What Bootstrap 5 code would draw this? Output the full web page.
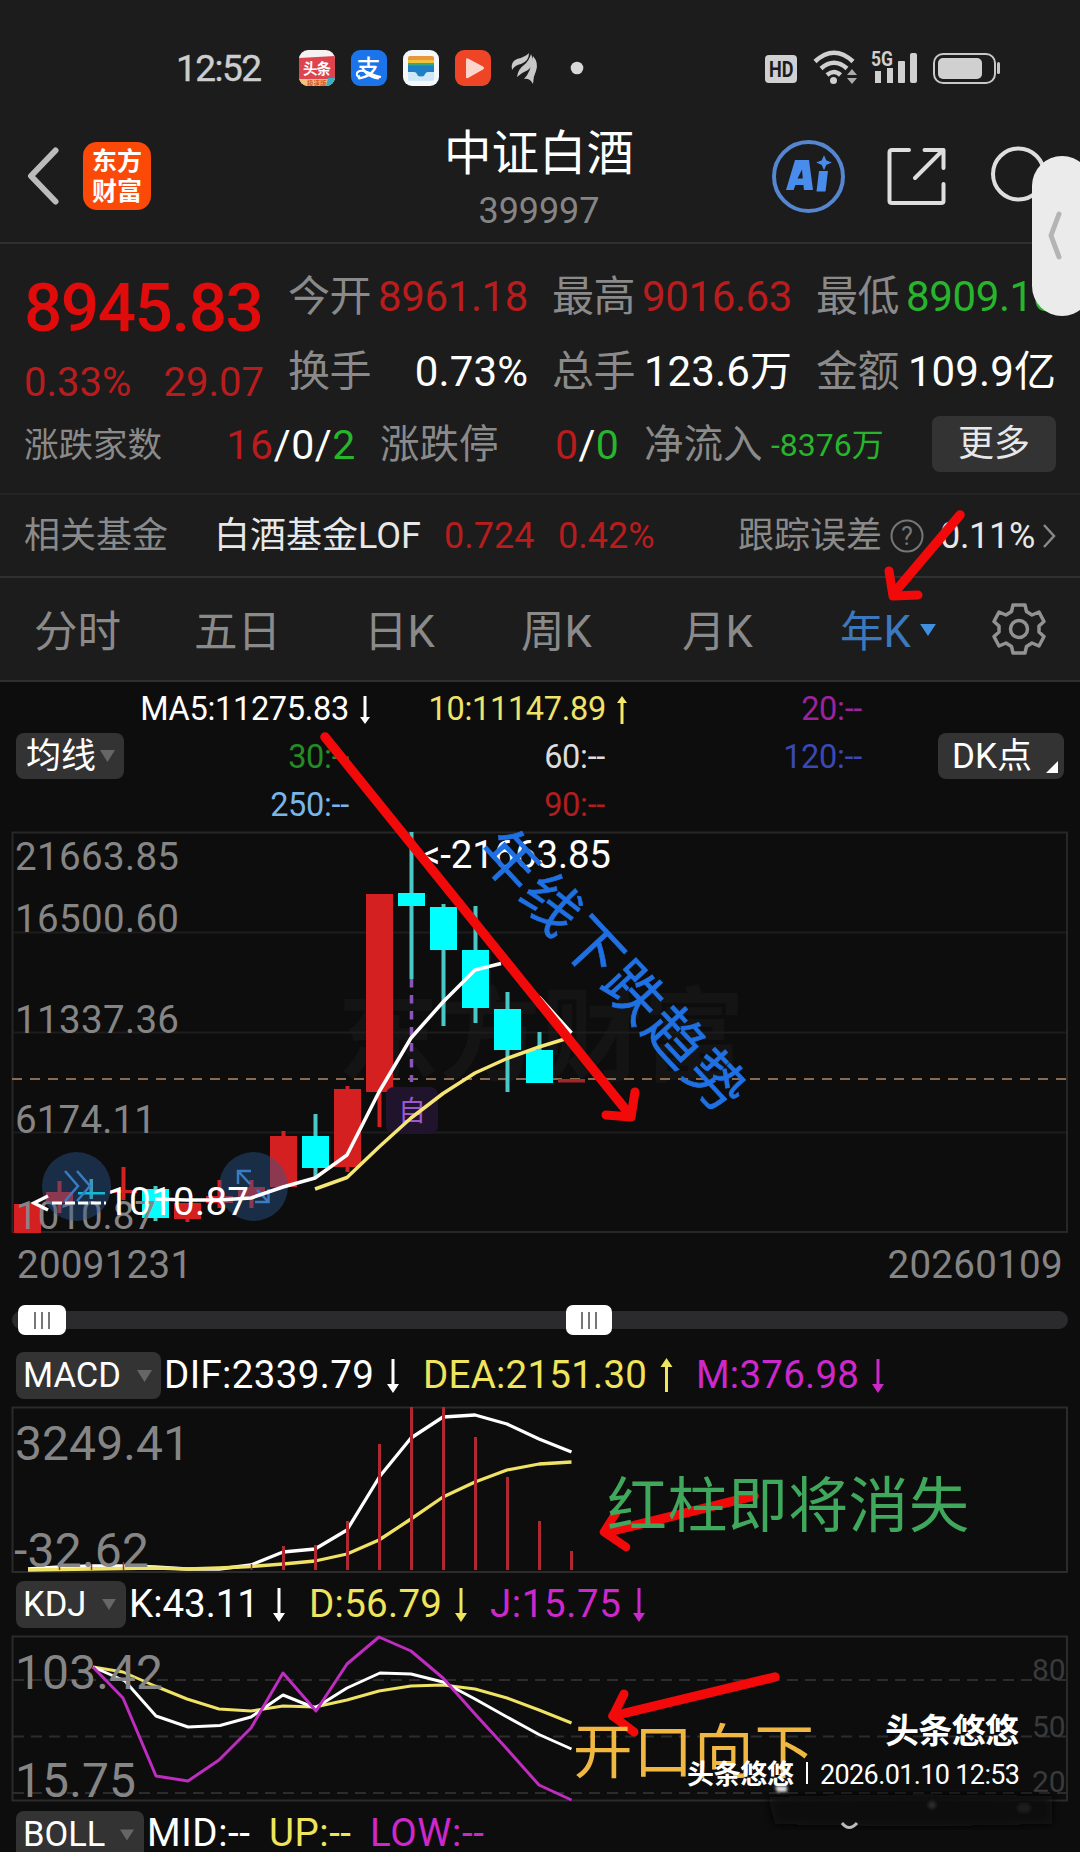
<!DOCTYPE html>
<html lang="zh-CN">
<head>
<meta charset="utf-8">
<meta name="viewport" content="width=device-width, initial-scale=1">
<title>中证白酒 399997</title>
<link rel="stylesheet" href="https://cdn.jsdelivr.net/npm/bootstrap@5.3.0/dist/css/bootstrap.min.css">
<style>
  body { width:1080px; height:1852px; overflow:hidden; background:#0d0d0d; color:#fff; line-height:1;
    font-family:Roboto,"Noto Sans CJK SC",sans-serif; }
  svg { display:block; flex:none; overflow:visible; }
  svg text { font-family:Roboto,"Noto Sans CJK SC",sans-serif; }
  .screen { position:relative; width:1080px; height:1852px; overflow:hidden; }
  .screen > * { flex-shrink:0; }
  .panel-top { background:#1c1c1c; }
  .t-red { color:#b81c1c; } .t-green { color:#27b52c; } .t-gray { color:#8a8a8a; }
  .statusbar { height:104px; padding:32px 80px 0 176px; }
  .clock { font-size:37px; letter-spacing:-1.5px; color:#cdcdcd; width:123px; -webkit-text-stroke:.4px #cdcdcd; }
  .app-ico { margin-right:16px; }
  .titlebar { height:140px; border-bottom:2px solid #303030; padding:6px 0 0 27px; }
  .t-name { font-size:47.5px; } .t-code { font-size:36px; letter-spacing:-.1px; color:#858585; }
  .quote { height:251px; border-bottom:2px solid #242424; padding-left:24px; }
  .q-line { height:75px; }
  .q-main { width:264px; }
  .q-price { font-size:67.5px; font-weight:500; color:#e00b0b; letter-spacing:-1.5px; height:115px; padding-top:30px; }
  .q-chg { font-size:40px; width:240px; height:50px; padding-top:4px; }
  .q-cell { width:240px; margin-right:24px; font-size:42px; letter-spacing:-.4px; }
  .q-line.second .q-cell { letter-spacing:.1px; }
  .q-cell .t-gray { letter-spacing:-.6px; font-size:42px; }
  .q-foot { font-size:41px; height:72px; white-space:nowrap; }
  .btn-more { width:124px; height:56px; background:#333; color:#e8e8e8; font-size:36px; border-radius:8px; line-height:1; margin-top:-2px; }
  .funds { height:83px; border-bottom:2px solid #303030; font-size:36px; padding-left:24px; }
  .tabs-k { height:104px; border-bottom:2px solid #303030; font-size:43.5px; color:#8a8a8a; padding:8px 0 0 34px; }
  .chip { background:#333; border-radius:8px; color:#fff; height:46px; font-size:35px; }
  .ma-zone { height:148px; padding:0 16px; }
  .ma-grid { width:772px; font-size:32.5px; }
  .ma-row { height:48px; }
  .ma-row > span { text-align:right; letter-spacing:-.3px; }
  .dates { height:58px; padding:4px 17px 0; font-size:38.5px; letter-spacing:.3px; color:#858585; }
  .ind-row { height:53px; padding-left:16px; }
  .ind-row .chip { font-size:34.5px; height:47px; padding-left:7px; }
  .slider { height:63px; padding:19px 12px 0; }
  .s-track { height:18px; background:#2b2b2d; border-radius:9px; width:1056px; }
  .s-thumb { position:absolute; top:-6px; height:30px; background:#fff; border-radius:7px; gap:5px; }
  .s-thumb i { width:2px; height:17px; background:#777; }
  .side-tab { position:absolute; left:1032px; top:156px; width:60px; height:160px; border-radius:34px; background:#ebebeb; z-index:3; }
  .overlay { position:absolute; left:0; top:0; z-index:2; pointer-events:none; }
</style>
</head>
<body>
<div class="screen d-flex flex-column">

  <div class="panel-top">
    <!-- status bar -->
    <div class="statusbar d-flex align-items-start">
      <div class="d-flex align-items-center" style="height:72px">
        <span class="clock">12:52</span>
        <svg class="app-ico" width="36" height="36" viewBox="0 0 36 36"><defs><clipPath id="c1"><rect width="36" height="36" rx="9"/></clipPath></defs><g clip-path="url(#c1)"><rect width="36" height="36" fill="#f6f2f2"/><path d="M0 8L36 6V30H0z" fill="#dc4450"/><rect y="29" width="36" height="7" fill="#f3c27c"/><path d="M29 28h7v8h-9z" fill="#35b3c4"/><text x="4" y="24" font-size="14.500" font-weight="700" fill="#fff" textLength="28">头条</text><text x="8" y="35.500" font-size="6.500" font-weight="700" fill="#d8572c">极速版</text></g></svg>
        <svg class="app-ico" width="36" height="36" viewBox="0 0 36 36"><rect width="36" height="36" rx="9" fill="#1c74ea"/><text x="5.500" y="26.500" font-size="24" font-weight="500" fill="#fff">支</text><path d="M9 26Q5 27 6 23Q8 19 16 22Q24 26 30 27" fill="none" stroke="#fff" stroke-width="2"/></svg>
        <svg class="app-ico" width="36" height="36" viewBox="0 0 36 36"><rect width="36" height="36" rx="9" fill="#f4f8fb"/><path d="M5 8q0-2 2-2h22q2 0 2 2v5H5z" fill="#e8963a"/><path d="M5 10h26v4H5z" fill="#f1c23c"/><path d="M5 13h26v3H5z" fill="#37a77e"/><path d="M5 15.500h26v11H5z" fill="#1e7fc4"/><path d="M5 22h6q2 0 3 2 1 3 4 3t4-3q1-2 3-2h6v7q0 2-2 2H7q-2 0-2-2z" fill="#cfe8f8"/></svg>
        <svg class="app-ico" width="36" height="36" viewBox="0 0 36 36"><rect width="36" height="36" rx="9" fill="#ee4527"/><path d="M11 9.500q0-2 2-1l15 8q2 1.500 0 3l-15 8.500q-2 1-2-1z" fill="#fbd5cb"/></svg>
        <svg width="30" height="36" viewBox="0 0 30 36" style="margin-left:3px;margin-right:30px"><g fill="#c8c8c8"><path d="M2 20Q0 12 7 9Q15 7 19 3Q19 11 11 14Q5 15 2 20z"/><path d="M7 27Q8 19 14 15Q19 11 21 4Q26 14 18 20Q11 23 7 27z"/><path d="M14 29Q21 22 23 6Q29 13 26 21Q23 27 23 34Q20 28 14 29z"/></g></svg>
        <svg width="14" height="14" viewBox="0 0 14 14"><circle cx="7" cy="7" r="6.300" fill="#d8d8d8"/></svg>
      </div>
      <div class="ms-auto" style="padding-top:18px">
        <svg width="236" height="36" viewBox="764 50 236 36"><rect x="765" y="55" width="32" height="28" rx="4" fill="#d0d0d0"/><text x="769" y="77" font-size="22" font-weight="700" fill="#1c1c1c" textLength="24.500" lengthAdjust="spacingAndGlyphs">HD</text>
          <g fill="none" stroke="#d0d0d0" stroke-width="4.500"><path d="M815 61.500Q834 44 853 61.500"/><path d="M821 68.500Q834 57 847 68.500"/><path d="M827 75Q834 69 840.500 75"/></g><circle cx="833.500" cy="80.500" r="3.500" fill="#d0d0d0"/><path d="M847 75l5-6 5 6zM847 78l5 6 5-6z" fill="#aaa"/>
          <text x="871" y="66" font-size="20" font-weight="700" fill="#d0d0d0" textLength="22" lengthAdjust="spacingAndGlyphs">5G</text>
          <g fill="#d0d0d0"><rect x="875" y="71" width="6" height="12"/><rect x="887" y="68" width="6" height="15"/><rect x="898" y="61" width="7" height="22" rx="1"/><rect x="910" y="53" width="7" height="30" rx="2"/></g>
          <rect x="934" y="54" width="61" height="29" rx="9" fill="none" stroke="#c8c8c8" stroke-width="2"/><rect x="938" y="58" width="44" height="21" rx="5" fill="#d0d0d0"/><rect x="997" y="62" width="3" height="12" rx="1.500" fill="#c8c8c8"/></svg>
      </div>
    </div>

    <!-- title bar -->
    <div class="titlebar d-flex align-items-center">
      <svg width="32" height="58" viewBox="0 0 32 58"><path d="M28.500 3.500L4 29L28.500 54.500" fill="none" stroke="#bcbcbc" stroke-width="6" stroke-linecap="round" stroke-linejoin="round"/></svg>
      <svg width="68" height="68" viewBox="0 0 68 68" style="margin-left:24px"><rect width="68" height="68" rx="14" fill="#fb4a08"/><g font-size="25" font-weight="700" fill="#fff"><text x="9" y="28" textLength="50">东方</text><text x="9" y="58" textLength="50">财富</text></g></svg>
      <div class="text-center" style="width:376px;margin-left:200px;padding-top:8px">
        <div class="t-name">中证白酒</div>
        <div class="t-code" style="margin-top:15px">399997</div>
      </div>
      <svg width="250" height="76" viewBox="768 138 250 76" style="margin-left:41px"><circle cx="808.500" cy="176.500" r="34.500" fill="none" stroke="#5586cf" stroke-width="4"/>
        <path d="M786 190l9-30h14l4 30h-9l-.6-5h-8l-1.800 5zM797.500 178.500h5.300l-.8-9z" fill="#4a8cec" fill-rule="evenodd"/><path d="M819 171h9l-2.500 20.500h-9z" fill="#4a8cec"/><path d="M824 157l1.800 4 4 1.500-4 1.800-1.800 4-1.800-4-4-1.800 4-1.500z" fill="#4a8cec" stroke="#4a8cec" stroke-width="1.500"/>
        <g fill="none" stroke="#dedede" stroke-width="4" stroke-linecap="round" stroke-linejoin="round"><path d="M909 150H892Q889.500 150 889.500 152.500V201Q889.500 203 892 203H941Q943.500 203 943.500 201V184M924.500 150H943.500V168M941 152L915 178"/><circle cx="1018.500" cy="174" r="25.500"/></g></svg>
    </div>

    <!-- quote -->
    <div class="quote">
      <div class="d-flex">
        <div class="q-main">
          <div class="q-price">8945.83</div>
          <div class="q-chg t-red d-flex justify-content-between align-items-start"><span>0.33%</span><span>29.07</span></div>
        </div>
        <div>
          <div class="d-flex q-line" style="height:105px">
            <div class="q-cell d-flex justify-content-between align-items-center"><span class="t-gray">今开</span><span class="t-red">8961.18</span></div>
            <div class="q-cell d-flex justify-content-between align-items-center"><span class="t-gray">最高</span><span class="t-red">9016.63</span></div>
            <div class="q-cell d-flex justify-content-between align-items-center"><span class="t-gray">最低</span><span class="t-green">8909.16</span></div>
          </div>
          <div class="d-flex q-line second" style="margin-top:-15px">
            <div class="q-cell d-flex justify-content-between align-items-center"><span class="t-gray">换手</span><span>0.73%</span></div>
            <div class="q-cell d-flex justify-content-between align-items-center"><span class="t-gray">总手</span><span>123.6万</span></div>
            <div class="q-cell d-flex justify-content-between align-items-center"><span class="t-gray">金额</span><span>109.9亿</span></div>
          </div>
        </div>
      </div>
      <div class="q-foot d-flex align-items-center">
        <span class="t-gray" style="font-size:34.500px;width:139px">涨跌家数</span>
        <span class="text-end" style="width:193px;letter-spacing:.6px"><span class="t-red">16</span>/0/<span class="t-green">2</span></span>
        <span class="t-gray" style="font-size:39.500px;margin-left:24px;width:118px">涨跌停</span>
        <span class="text-end" style="width:121px;letter-spacing:.3px"><span class="t-red">0</span>/<span class="t-green">0</span></span>
        <span class="t-gray" style="font-size:39.500px;margin-left:25px;width:119px">净流入</span>
        <span class="t-green" style="font-size:32px;margin-left:8px;width:161px">-8376万</span>
        <button class="btn btn-more p-0 border-0">更多</button>
      </div>
    </div>

    <!-- related fund -->
    <div class="funds d-flex align-items-center">
      <span class="t-gray" style="width:190px">相关基金</span>
      <span style="width:230px;color:#e8e8e8">白酒基金LOF</span>
      <span class="t-red" style="width:114px">0.724</span>
      <span class="t-red" style="width:180px">0.42%</span>
      <span class="t-gray" style="width:152px">跟踪误差</span>
      <svg width="34" height="34" viewBox="0 0 34 34"><circle cx="17" cy="17" r="15.500" fill="none" stroke="#777" stroke-width="2"/><text x="17" y="26" text-anchor="middle" font-size="25" fill="#777">?</text></svg>
      <span style="margin-left:16px;width:102px;letter-spacing:-.3px;color:#e8e8e8">0.11%</span>
      <svg width="14" height="26" viewBox="0 0 14 26"><path d="M2 2L12 13L2 24" fill="none" stroke="#888" stroke-width="2.500"/></svg>
    </div>

    <!-- period tabs -->
    <div class="tabs-k d-flex align-items-center">
      <span style="width:160px">分时</span>
      <span style="width:170px">五日</span>
      <span style="width:157px">日K</span>
      <span style="width:161px">周K</span>
      <span style="width:158px">月K</span>
      <span style="width:80px;color:#3c78bd">年K</span>
      <svg width="16" height="13" viewBox="0 0 17 14" style="margin-top:-6px"><path d="M0 0H17L8.500 13z" fill="#4090e0"/></svg>
      <svg width="52" height="52" viewBox="-26 -26 52 52" style="margin-left:57px;margin-top:-8px"><path d="M-6-24H6L7.500-17.500L13-14L20-17L25-7.500L20-3V3L25 7.500L20 17L13 14L7.500 17.500L6 24H-6L-7.500 17.500L-13 14L-20 17L-25 7.500L-20 3V-3L-25-7.500L-20-17L-13-14L-7.500-17.500z" fill="none" stroke="#929292" stroke-width="3.500" stroke-linejoin="round"/><circle r="8.500" fill="none" stroke="#929292" stroke-width="3.500"/></svg>
    </div>
  </div>

  <!-- moving averages -->
  <div class="ma-zone d-flex align-items-center">
    <div class="chip d-flex align-items-center" style="width:108px;padding-left:10px">均线<svg class="ms-1" width="15" height="12" viewBox="0 0 15 12"><path d="M0 0H15L7.500 12z" fill="#666"/></svg></div>
    <div class="ma-grid" style="margin-top:3px">
      <div class="ma-row d-flex align-items-center"><span style="width:225px">MA5:11275.83</span>
        <svg width="10" height="28" viewBox="0 0 10 28" style="margin-left:11px"><path d="M3.500 0h3v21h3.500L5 28L0 21h3.500z" fill="#fff"/></svg>
        <span style="width:236px;color:#efe36a">10:11147.89</span>
        <svg width="10" height="28" viewBox="0 0 10 28" style="margin-left:11px"><path d="M3.500 28h3V7H10L5 0L0 7h3.500z" fill="#f5e96a"/></svg>
        <span style="width:235px;color:#9b239b">20:--</span></div>
      <div class="ma-row d-flex align-items-center"><span style="width:225px;color:#248c24">30:--</span><span style="width:256px;color:#ddd">60:--</span><span style="width:257px;color:#3b48b4">120:--</span></div>
      <div class="ma-row d-flex align-items-center"><span style="width:225px;color:#78b6e8">250:--</span><span style="width:256px;color:#b01e1e">90:--</span></div>
    </div>
    <div class="chip d-flex align-items-center ms-auto" style="width:126px;padding-left:14px">DK点<svg width="12" height="12" viewBox="0 0 12 12" style="margin-left:14px;margin-top:22px"><path d="M12 0V12H0z" fill="#fff"/></svg></div>
  </div>

  <!-- yearly candles -->
  <svg width="1080" height="404" viewBox="0 830 1080 404">
    <text x="337" y="1073" font-size="102" font-weight="700" fill="#141414">东方财富</text>
    <g fill="none" stroke="#272727" stroke-width="2"><path d="M12.500 832.500H1067V1232H12.500z"/></g>
    <g stroke="#1d1d1d" stroke-width="2"><path d="M13 932.500H1066M13 1032.500H1066M13 1132.500H1066"/></g>
    <path d="M12 1079H1066" stroke="#8a6a50" stroke-width="1.800" stroke-dasharray="10 8"/>
    <g fill="#d42020">
      <path d="M14 1204h27v29h-27zM46 1192h27v11h-27zM57.500 1181h4v32h-4zM110 1190h27v3h-27zM121.500 1167h4v33h-4zM174 1203h27v16h-27zM185.500 1203h4v19h-4zM206 1196h27v7h-27zM217.500 1180h4v28h-4zM238 1187h27v10h-27zM249.500 1180h4v28h-4zM270 1136h27v51h-27zM281.500 1131h4v10h-4zM334 1089h27v78h-27zM345.500 1086h4v86h-4zM366 894h27v198h-27zM377.500 1090h4v37h-4z"/><path d="M558 1079h27v3.500h-27z" fill="#a02828"/>
    </g>
    <g fill="#4ac8c8"><path d="M89.500 1179h3.500v20h-3.500zM153.500 1186h4v35h-4zM313.500 1114h4v64h-4zM409.500 832h4v147h-4zM441.500 904h4v122h-4zM473.500 906h4v117h-4zM505.500 992h4v100h-4zM537.500 1032h4v51h-4z"/></g>
    <g fill="#00ffff"><path d="M78 1192h27v2.500h-27zM142 1189h27v29h-27zM302 1136h27v32h-27zM398 893h27v13h-27zM430 907h27v43h-27zM462 950h27v58h-27zM494 1009h27v41h-27zM526 1050h27v33h-27z"/></g>
    <g fill="#858585" font-size="38.500">
      <text x="15" y="870" textLength="164">21663.85</text><text x="15" y="932" textLength="164">16500.60</text><text x="15" y="1033" textLength="164">11337.36</text><text x="15" y="1133" textLength="141">6174.11</text><text x="16" y="1229" textLength="140">1010.87</text></g>
    <path d="M411.500 979V1082" stroke="#8b55b8" stroke-width="3.500" stroke-dasharray="8.500 7.500"/>
    <rect x="386" y="1087" width="52" height="47" rx="8" fill="#20132c"/>
    <text x="412" y="1121" font-size="28" fill="#9b58d0" text-anchor="middle">自</text>
    <circle cx="76.500" cy="1186.500" r="34.500" fill="#2a5a96" fill-opacity=".42"/><circle cx="253.500" cy="1186.500" r="34.500" fill="#2a5a96" fill-opacity=".42"/>
    <path d="M65 1171L78 1186L65 1201M77 1171L90 1186L77 1201" fill="none" stroke="#3a7cc4" stroke-width="2.500"/>
    <path d="M251 1171H238V1184M238 1171L250 1184M255 1202H268.500V1189M268.500 1202L257 1190" fill="none" stroke="#3a7cc4" stroke-width="2.500"/>
    <g fill="none" stroke-width="3.500" stroke-linejoin="round">
      <path stroke="#fff" d="M155 1199L187 1200L219 1200L251 1198L283 1187L315 1178L347 1155L379 1092L411 1038L443 1002L475 970L501 963.500M539 997L571.500 1033"/>
      <path stroke="#f5e676" d="M315 1189L347 1177.500L379 1147L411 1118L443 1093.500L475 1073L507 1058.500L539 1047L571.500 1037"/></g>
    <g fill="#fff" font-size="38.500"><text x="421" y="868" textLength="190">&lt;-21663.85</text><text x="107" y="1215" textLength="142">1010.87</text></g>
    <path d="M48 1196L34 1203L48 1210" fill="none" stroke="#fff" stroke-width="3.500"/><path d="M52 1203H106" stroke="#fff" stroke-width="3" stroke-dasharray="10 3"/>
  </svg>

  <div class="dates d-flex justify-content-between align-items-center"><span>20091231</span><span>20260109</span></div>

  <!-- range slider -->
  <div class="slider d-flex align-items-start">
    <div class="s-track position-relative">
      <div class="s-thumb d-flex align-items-center justify-content-center" style="left:6px;width:48px"><i></i><i></i><i></i></div>
      <div class="s-thumb d-flex align-items-center justify-content-center" style="left:554px;width:46px"><i></i><i></i><i></i></div>
    </div>
  </div>

  <!-- MACD -->
  <div class="ind-row d-flex align-items-start" style="margin-top:-3px">
    <div class="chip d-flex align-items-center" style="width:145px">MACD<svg width="15" height="12" viewBox="0 0 15 12" style="margin-left:16px"><path d="M0 0H15L7.500 12z" fill="#666"/></svg></div>
    <svg width="730" height="47" viewBox="161 1352 730 47" font-size="38.500">
      <text x="164" y="1388" fill="#fff" textLength="210">DIF:2339.79</text><text x="423" y="1388" fill="#f0e45c" textLength="224">DEA:2151.30</text><text x="696" y="1388" fill="#cc28cc" textLength="163">M:376.98</text>
      <path d="M391.500 1359h3v25h4.500L393 1393l-6-9h4.500z" fill="#fff"/><path d="M665 1392h3v-25h4.500L666.500 1358l-6 9h4.500z" fill="#f0e45c"/><path d="M876.500 1359h3v25h4.500L878 1393l-6-9h4.500z" fill="#cc28cc"/></svg>
  </div>
  <svg width="1080" height="168" viewBox="0 1405 1080 168">
    <path d="M12.500 1407.500H1067V1572H12.500z" fill="none" stroke="#2b2b2b" stroke-width="2"/>
    <g fill="none" stroke-width="3.300" stroke-linejoin="round"><path stroke="#fff" d="M28 1569L60 1567L91 1566L123 1566L155 1567L187 1569L219 1569L251 1565L283 1552L315 1549L347 1530L380 1476L411 1438L443 1417L475 1415L507 1424L539 1439L571.500 1452"/>
    <path stroke="#efe264" d="M28 1570L155 1568L187 1569L219 1568L251 1566.500L283 1564L315 1561L347 1554L379 1540L411 1519L443 1497L475 1482L507 1470L539 1464L571.500 1462"/></g>
    <path stroke="#b0282f" stroke-width="3" d="M283.500 1546V1570M315.500 1545V1570M347.500 1521V1570M379.500 1444V1570M411.500 1407V1570M443.500 1407V1570M475.500 1437V1570M507.500 1477V1570M539.500 1521V1570M571.500 1551V1570"/>
    <path stroke="#b0282f" stroke-width="1.500" d="M59.500 1565V1570M91.500 1564V1570M123.500 1562V1570M251.500 1564V1570"/>
    <g fill="#858585" font-size="48"><text x="15" y="1460" textLength="175">3249.41</text><text x="14" y="1567" textLength="135">-32.62</text></g>
  </svg>

  <!-- KDJ -->
  <div class="ind-row d-flex align-items-start" style="padding-top:8px;height:62px">
    <div class="chip d-flex align-items-center" style="width:110px">KDJ<svg width="14" height="11" viewBox="0 0 15 12" style="margin-left:16px"><path d="M0 0H15L7.500 12z" fill="#666"/></svg></div>
    <svg width="530" height="47" viewBox="126 1581 530 47" font-size="38.500">
      <text x="129" y="1617" fill="#fff" textLength="130">K:43.11</text><text x="309" y="1617" fill="#f0e45c" textLength="133">D:56.79</text><text x="490" y="1617" fill="#cc28cc" textLength="131">J:15.75</text>
      <path d="M277.500 1588h3v25h4.500L279 1622l-6-9h4.500z" fill="#fff"/><path d="M459.500 1588h3v25h4.500L461 1622l-6-9h4.500z" fill="#f0e45c"/><path d="M637.500 1588h3v25h4.500L639 1622l-6-9h4.500z" fill="#cc28cc"/></svg>
  </div>
  <svg width="1080" height="168" viewBox="0 1635 1080 168">
    <path d="M12.500 1636.500H1067V1800.500H12.500z" fill="none" stroke="#2b2b2b" stroke-width="2"/>
    <path d="M13 1680H1066M13 1736.500H1066M13 1793H1066" stroke="#2c2c2c" stroke-width="2" stroke-dasharray="11 7"/>
    <g fill="#3a3a3a" font-size="30"><text x="1032" y="1680">80</text><text x="1032" y="1737">50</text><text x="1032" y="1792">20</text></g>
    <g fill="none" stroke-width="3" stroke-linejoin="round">
      <path stroke="#efe264" d="M93 1667L123 1672L155 1686L187 1699L219 1709L251 1711L283 1706L315 1707L347 1700L379 1691L411 1686L443 1685L475 1689L507 1698L539 1710L571.500 1723"/>
      <path stroke="#fff" d="M93 1667L125 1681L156 1716L188 1727L220 1725.500L251 1717L283 1695L315 1708L347 1688L380 1673L411 1674L443 1682L475 1699L507 1717L539 1734.500L571.500 1749"/>
      <path stroke="#bf2cc0" d="M93 1667L123 1698L156 1776L188 1781L219 1760L251 1728L283 1673L316 1711L347 1664L379 1637L411 1651L443 1678L475 1714L507 1749L539 1785L571.500 1800"/></g>
    <g fill="#858585" font-size="48"><text x="15" y="1689" textLength="148">103.42</text><text x="15" y="1797" textLength="121">15.75</text></g>
  </svg>

  <!-- BOLL -->
  <div class="ind-row d-flex align-items-start" style="padding-top:8px">
    <div class="chip d-flex align-items-center" style="width:128px">BOLL<svg width="14" height="12" viewBox="0 0 15 12" style="margin-left:15px"><path d="M0 0H15L7.500 12z" fill="#666"/></svg></div>
    <svg width="370" height="47" viewBox="144 1811 370 47" font-size="38.500"><text x="147" y="1846" fill="#fff" textLength="103">MID:--</text><text x="269" y="1846" fill="#f0e45c" textLength="82">UP:--</text><text x="370" y="1846" fill="#cc28cc" textLength="114">LOW:--</text></svg>
  </div>

  <!-- edge panel handle -->
  <div class="side-tab"><svg width="60" height="160" viewBox="1032 156 60 160"><path d="M1059 214L1051 235.500L1059 257" fill="none" stroke="#b4b4b4" stroke-width="5" stroke-linecap="round" stroke-linejoin="round"/></svg></div>

  <!-- hand-drawn marks and captions over the charts -->
  <svg class="overlay" width="1080" height="1852" viewBox="0 0 1080 1852">
    <defs><filter id="soft"><feGaussianBlur stdDeviation="5"/></filter><filter id="soft1"><feGaussianBlur stdDeviation="1.500"/></filter></defs>
    <g fill="none" stroke="#f20a0a" stroke-width="9.500" stroke-linecap="round" stroke-linejoin="round">
      <path d="M325 737L630 1115"/><path d="M606 1115L631 1117L635 1092" stroke-width="9"/>
      <path d="M960 515L894 593"/><path d="M889 571L893 596L918 595" stroke-width="9"/>
      <path d="M754 1496L608 1532"/><path d="M616 1513L604 1532L626 1547" stroke-width="8.500"/>
      <path d="M775 1677L613 1716"/><path d="M624 1694L613 1716L634 1732" stroke-width="9"/>
    </g>
    <text transform="translate(511,859) rotate(47)" x="-29" y="22" font-size="58" fill="#1f70e2" stroke="#1f70e2" stroke-width=".6" textLength="360">年线下跌趋势</text>
    <text x="607" y="1527" font-size="60" fill="#3fa85c" textLength="362">红柱即将消失</text>
    <text x="573" y="1773" font-size="59.500" fill="#f0b843" textLength="241">开口向下</text>
    <g filter="url(#soft)"><path d="M768 1797Q900 1792 1052 1796V1824Q900 1828 775 1824z" fill="#0a0a0a"/></g>
    <g filter="url(#soft1)"><path d="M775 1786H787V1792H777z" fill="#ddd"/><ellipse cx="932" cy="1805" rx="4" ry="4" fill="#2a2a2a"/><ellipse cx="1024" cy="1808" rx="7" ry="5" fill="#1f1f1f"/></g>
    <path d="M842 1823Q849 1832 857 1823" fill="none" stroke="#bbb" stroke-width="3"/>
    <g fill="#fff"><text x="885" y="1743" font-size="34" font-weight="700" textLength="134">头条悠悠</text><text x="687" y="1784" font-size="27" font-weight="700" textLength="107">头条悠悠</text><rect x="806" y="1762" width="2" height="22"/><text x="820" y="1784" font-size="27" textLength="200">2026.01.10 12:53</text></g>
  </svg>
</div>
<script src="https://cdn.jsdelivr.net/npm/bootstrap@5.3.0/dist/js/bootstrap.bundle.min.js"></script>
</body>
</html>
